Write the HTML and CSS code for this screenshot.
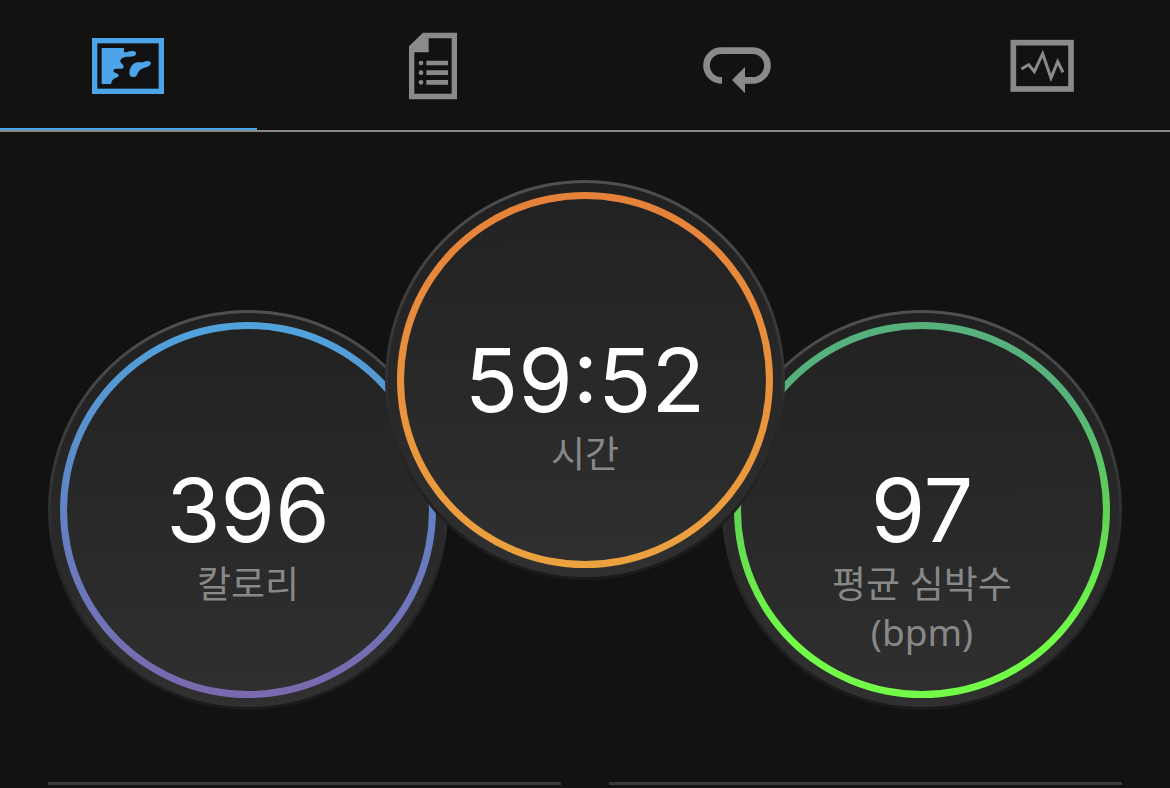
FILE: index.html
```
<!DOCTYPE html>
<html lang="ko">
<head>
    <meta charset="UTF-8">
    <meta name="viewport" content="width=device-width, initial-scale=1.0">
    <title>활동</title>
    <link rel="stylesheet" href="styles.css">
</head>
<body>
    <nav class="tabs">
        <button type="button" class="tab active" aria-label="지도">
            <svg class="icon" viewBox="24 3 240 240">
                <rect x="44" y="47" width="200" height="152" fill="none" stroke="currentColor" stroke-width="16"/>
                <path fill="currentColor" d="M65 69H132C134 73 130 76 132 80C136 86 146 77 157 78C166 78 170 83 168 88C165 95 152 96 143 95C134 95 122 99 121 107C120 115 132 117 131 125C130 134 119 131 109 131C101 131 98 137 102 141C107 146 117 145 116 152C115 157 107 157 102 161C96 165 95 170 93 177H65Z"/>
                <path fill="currentColor" d="M149 149C146 137 153 121 163 115C173 109 182 114 191 111C198 108 206 106 211 111C215 117 210 122 203 125C193 128 184 130 178 137C172 143 173 151 166 155C159 158 150 155 149 149Z"/>
            </svg>
        </button>
        <button type="button" class="tab" aria-label="세부 정보">
            <svg class="icon" viewBox="9 18 240 240">
                <path fill="currentColor" fill-rule="evenodd" d="M99 38H201V238H57V79ZM116 55V97H73V221H185V55Z"/>
                <circle cx="93" cy="129" r="7" fill="currentColor"/>
                <circle cx="93" cy="158" r="7" fill="currentColor"/>
                <circle cx="93" cy="187" r="7" fill="currentColor"/>
                <path fill="none" stroke="currentColor" stroke-width="14" d="M109 129H174M109 158H174M109 187H174"/>
            </svg>
        </button>
        <button type="button" class="tab" aria-label="랩">
            <svg class="icon" viewBox="21 -12 240 240">
                <path fill="none" stroke="currentColor" stroke-width="20" d="M96 151H94A44 44 0 0 1 94 62H188A44 44 0 0 1 188 151H160"/>
                <path fill="currentColor" d="M126 150L165 111V190Z"/>
            </svg>
        </button>
        <button type="button" class="tab" aria-label="차트">
            <svg class="icon" viewBox="20 3 240 240">
                <rect x="54" y="53" width="173" height="139" fill="none" stroke="currentColor" stroke-width="17"/>
                <path fill="none" stroke="currentColor" stroke-width="9" stroke-miterlimit="10" d="M78 132L100 119L117 140L142 86L167 159L187 110L203 142"/>
            </svg>
        </button>
    </nav>

    <main class="content">
        <section class="dials">
            <div class="dial calories">
                <div class="ring">
                    <div class="value">396</div>
                    <div class="label">칼로리</div>
                </div>
            </div>
            <div class="dial time">
                <div class="ring">
                    <div class="value">59:52</div>
                    <div class="label">시간</div>
                </div>
            </div>
            <div class="dial heart">
                <div class="ring">
                    <div class="value">97</div>
                    <div class="label">평균 심박수<br>(bpm)</div>
                </div>
            </div>
        </section>

        <section class="stats">
            <div class="stat"></div>
            <div class="stat"></div>
        </section>
    </main>
</body>
</html>
```

FILE: styles.css
```
* {
    box-sizing: border-box;
}

body {
    margin: 0;
    background-color: #121212;
    color: #fff;
    font-family: "Noto Sans", "Noto Sans CJK KR", sans-serif;
}

/* Tabs */
.tabs {
    display: grid;
    grid-template-columns: repeat(4, 1fr);
    gap: 48px;
    border-bottom: 2px solid #888;
}

.tab {
    display: flex;
    justify-content: center;
    padding: 26px 0 22px;
    border: none;
    border-bottom: 2px solid transparent;
    background: none;
    color: #8a8a8a;
    cursor: pointer;
}

.tab.active {
    color: #4ca5e8;
    border-bottom-color: #4ca5e8;
}

.icon {
    display: block;
    width: 80px;
    height: 80px;
}

.content {
    padding: 48px 48px 0;
}

/* Dials */
.dials {
    display: flex;
    justify-content: center;
    align-items: flex-end;
}

.dial {
    flex: none;
    width: 400px;
    height: 400px;
    padding: 9px;
    border: 3px solid transparent;
    border-radius: 50%;
    background:
        linear-gradient(#202020, #303030) padding-box,
        linear-gradient(#505050, #303030 50%, #262626 65%, #1a1a1a) border-box;
}

.ring {
    height: 100%;
    padding-top: 133px;
    border: 7px solid transparent;
    border-radius: 50%;
    text-align: center;
    background:
        linear-gradient(#222, #2f2f2f) padding-box,
        linear-gradient(var(--from), var(--middle), var(--to)) border-box;
}

.calories {
    --from: #50a3dc;
    --middle: #6083c4;
    --to: #7b68ae;
}

.time {
    --from: #e5813a;
    --middle: #e8913c;
    --to: #eca23f;
    z-index: 1;
    margin: 0 -63px 130px;
}

.heart {
    --from: #56b17c;
    --middle: #5fd254;
    --to: #72fc48;
}

.heart .ring {
    background:
        linear-gradient(#222, #2f2f2f) padding-box,
        linear-gradient(var(--from) 20%, var(--middle) 50%, var(--to) 85%) border-box;
}

.value {
    font-family: Inter, sans-serif;
    font-size: 88px;
    font-optical-sizing: none;
    line-height: 96px;
}

.label {
    margin-top: 2px;
    color: #888;
    font-size: 37px;
    line-height: 48px;
}

/* Stats */
.stats {
    display: grid;
    grid-template-columns: 1fr 1fr;
    gap: 48px;
    margin-top: 72px;
}

.stat {
    border-top: 3px solid #3a3a3a;
}
```
